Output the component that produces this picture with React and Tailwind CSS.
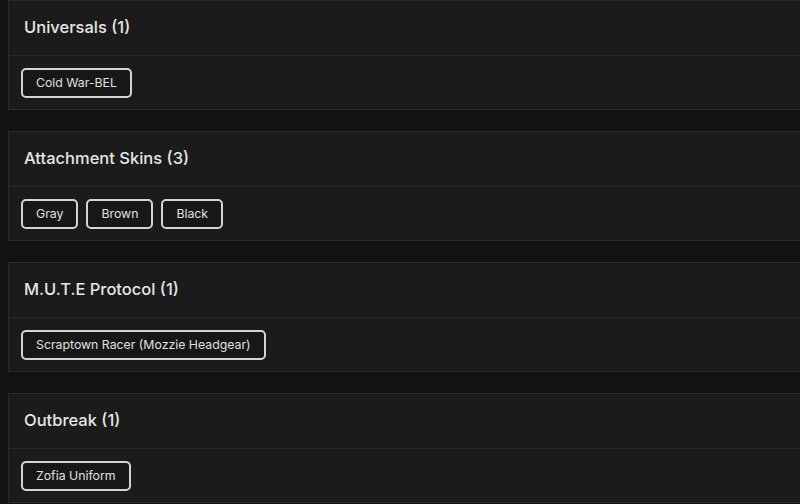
import React from 'react';

const groups = [
    { title: 'Universals', items: ['Cold War-BEL'] },
    { title: 'Attachment Skins', items: ['Gray', 'Brown', 'Black'] },
    { title: 'M.U.T.E Protocol', items: ['Scraptown Racer (Mozzie Headgear)'] },
    { title: 'Outbreak', items: ['Zofia Uniform'] },
];

const SkinGroup = ({ title, items }) => (
    <div className="w-[820px] ml-[8px] bg-[#1b1b1b] border border-[#2a2a2a]">
        {/* En-tête */}
        <div className="h-[55px] flex items-center pl-[15px] pb-[1px] border-b border-[#2a2a2a]">
            <h2 className="text-[16.5px] font-medium text-[#e6e6e6]">
                {title} ({items.length})
            </h2>
        </div>
        {/* Liste */}
        <div className="h-[53px] flex items-start gap-2 pl-[12px] pt-[12px]">
            {items.map((item) => (
                <span
                    key={item}
                    className="h-[30px] flex items-center px-[13px] rounded-[5px] border-2 border-[#d4d4d4] bg-[#171717] text-[12.3px] text-[#e0e0e0]"
                >
                    {item}
                </span>
            ))}
        </div>
    </div>
);

export default function App() {
    return (
        <div
            className="w-[800px] h-[504px] overflow-hidden bg-[#121212] flex flex-col gap-[21px]"
            style={{ fontFamily: 'Inter, "Noto Sans", sans-serif' }}
        >
            {groups.map((g) => (
                <SkinGroup key={g.title} {...g} />
            ))}
        </div>
    );
}
